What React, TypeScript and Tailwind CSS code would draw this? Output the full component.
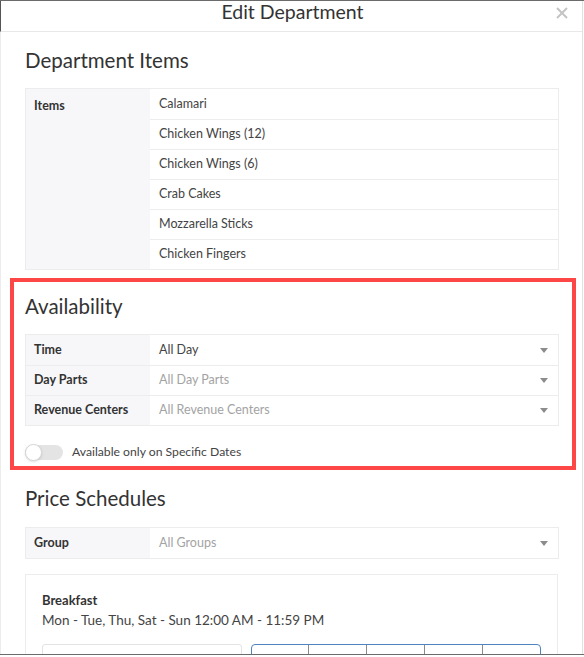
import { ArrowUp } from 'lucide-react';

const items = [
  'Calamari',
  'Chicken Wings (12)',
  'Chicken Wings (6)',
  'Crab Cakes',
  'Mozzarella Sticks',
  'Chicken Fingers',
];

function Caret() {
  return (
    <svg width="8" height="5" viewBox="0 0 8 5" className="shrink-0">
      <path d="M0 0h8L4 5z" fill="#8c8c8c" />
    </svg>
  );
}

interface SelectRowProps {
  label: string;
  value: string;
  placeholder?: boolean;
  first?: boolean;
}

function SelectRow({ label, value, placeholder, first }: SelectRowProps) {
  return (
    <div className={`flex h-[30px] ${first ? '' : 'border-t border-[#ededed]'}`}>
      <div className="w-[124px] shrink-0 bg-[#f7f7f9] pl-[8px] flex items-center font-bold text-[#333]">
        {label}
      </div>
      <div className="flex-1 flex items-center justify-between pl-[9px] pr-[10px]">
        <span className={placeholder ? 'text-[#a3a3a3]' : 'text-[#444]'}>{value}</span>
        <Caret />
      </div>
    </div>
  );
}

function SectionTitle({ children }: { children: React.ReactNode }) {
  return <h2 className="text-[20.5px] leading-[28px] text-[#333]">{children}</h2>;
}

export default function App() {
  return (
    <div className="w-[584px] h-[655px] overflow-hidden bg-white border-t border-b border-[#6b6b6b] font-['Lato',sans-serif] text-[12.5px]">
      <div className="w-[583px] h-full border-r border-[#e2e2e2]">
        {/* Header */}
        <div className="relative h-[31px] border-b border-l border-[#e8e8e8] border-l-[#555] flex items-center justify-center">
          <span className="text-[19.5px] text-[#333] -mt-[8px] ml-[2px]">Edit Department</span>
          <svg className="absolute right-[14px] top-[6px]" width="12" height="12" viewBox="0 0 12 12">
            <path d="M1 1l10 10M11 1L1 11" stroke="#c4c4c4" strokeWidth="2" />
          </svg>
        </div>

        <div className="border-l border-[#ececec] pl-[24px] pr-[23px] pt-[14px] h-full">
          {/* Department Items */}
          <SectionTitle>Department Items</SectionTitle>
          <div className="mt-[14px] flex border border-[#ececec]">
            <div className="w-[124px] shrink-0 bg-[#f7f7f9] pl-[8px] pt-[8px] font-bold text-[#333]">Items</div>
            <div className="flex-1">
              {items.map((item, i) => (
                <div
                  key={item}
                  className={`h-[30px] flex items-center pl-[9px] text-[#444] ${i ? 'border-t border-[#ededed]' : ''}`}
                >
                  {item}
                </div>
              ))}
            </div>
          </div>

          {/* Availability */}
          <div className="mt-[8px] ml-[-15px] mr-[-17px] border-[4px] border-[#fd4747] pl-[11px] pr-[13px] pt-[10px] pb-[6px]">
            <SectionTitle>Availability</SectionTitle>
            <div className="mt-[14px] border border-[#ececec]">
              <SelectRow first label="Time" value="All Day" />
              <SelectRow label="Day Parts" value="All Day Parts" placeholder />
              <SelectRow label="Revenue Centers" value="All Revenue Centers" placeholder />
            </div>
            <div className="mt-[18px] h-[16px] flex items-center gap-[9px]">
              <div className="relative w-[38px] h-[15px] rounded-full bg-[#e4e4e4]">
                <div className="absolute left-0 top-[-1px] w-[17px] h-[17px] rounded-full bg-white border border-[#d6d6d6] shadow-sm" />
              </div>
              <span className="text-[#444] text-[12.2px]">Available only on Specific Dates</span>
            </div>
          </div>

          {/* Price Schedules */}
          <div className="mt-[14px]">
            <SectionTitle>Price Schedules</SectionTitle>
          </div>
          <div className="mt-[15px] border border-[#ececec]">
            <SelectRow first label="Group" value="All Groups" placeholder />
          </div>

          <div className="mt-[15px] mr-[1px] border border-[#ececec] pl-[16px] pr-[16px] pt-[16px]">
            <div className="font-bold text-[13px] leading-[18px] text-[#333]">Breakfast</div>
            <div className="mt-[1px] text-[13.5px] leading-[20px] text-[#444]">
              Mon - Tue, Thu, Sat - Sun 12:00 AM - 11:59 PM
            </div>
            <div className="mt-[14px] flex gap-[9px]">
              <div className="w-[200px] h-[32px] border border-[#e3e3e3] rounded-[3px] flex items-center justify-between pl-[8px] pr-[8px]">
                <span className="text-[#555]">5.00</span>
                <span className="w-[13px] h-[13px] rounded-full bg-[#c8c8c8]" />
              </div>
              <div className="w-[291px] h-[32px] flex border border-[#4f83bf] rounded-[4px] text-[#3b6fae]">
                {['', '', '', '%', '%'].map((s, i) => (
                  <div
                    key={i}
                    className={`flex-1 flex items-center justify-center gap-[2px] ${i ? 'border-l border-[#8a8a8a]' : ''}`}
                  >
                    <ArrowUp size={12} strokeWidth={2.5} />
                    {s && <span className="text-[12px]">{s}</span>}
                  </div>
                ))}
              </div>
            </div>
          </div>
        </div>
      </div>
    </div>
  );
}
